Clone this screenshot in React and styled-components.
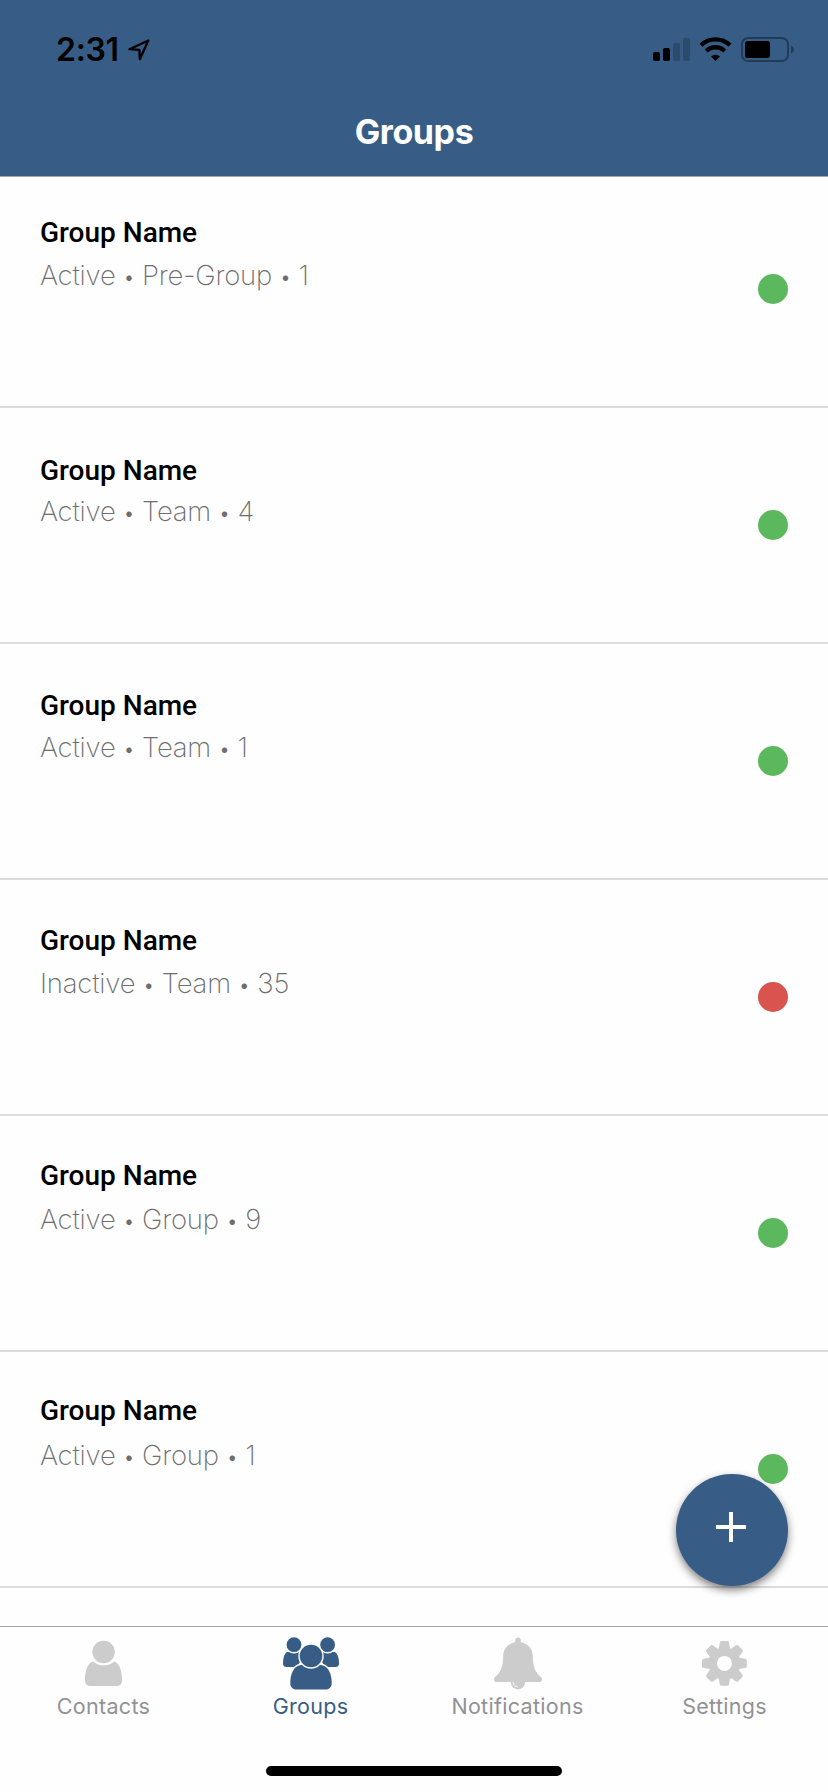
import React from "react";
import styled, { createGlobalStyle } from "styled-components";

const GlobalStyle = createGlobalStyle`
  * { box-sizing: border-box; }
  body { margin: 0; background: #fefefe; font-family: Inter, "Liberation Sans", sans-serif; }
`;

const BLUE = "#375d86";
const STATUS = { Active: "#5cb85c", Inactive: "#d9534f" };

const Screen = styled.div`
  position: relative;
  width: 828px;
  height: 1792px;
  display: flex;
  flex-direction: column;
  overflow: hidden;
  background: #fefefe;
`;

const Header = styled.header`
  flex: none;
  height: 177px;
  background: ${BLUE};
  border-bottom: 1px solid #a7a6ab;
`;

const StatusBar = styled.div`
  height: 88px;
  padding: 11px 34px 0 56px;
  display: flex;
  align-items: center;
  justify-content: space-between;
`;

const StatusGroup = styled.div`
  display: flex;
  align-items: center;
  gap: 8px;
`;

const Clock = styled.span`
  font-size: 32px;
  line-height: 40px;
  font-weight: 600;
  letter-spacing: -0.3px;
  color: #000;
`;

const Title = styled.h1`
  margin: 0;
  height: 88px;
  text-align: center;
  font-size: 34px;
  line-height: 88px;
  font-weight: 700;
  letter-spacing: -0.4px;
  color: #fff;
`;

const List = styled.main`
  flex: 1;
  min-height: 0;
  overflow: hidden;
`;

const Row = styled.section`
  height: ${(p) => p.$height}px;
  padding: 0 40px 102px;
  border-bottom: 2px solid #dcdcdd;
  display: flex;
  align-items: flex-end;
  justify-content: space-between;
`;

const RowText = styled.div`
  margin-bottom: 11px;
`;

const Name = styled.h2`
  margin: 0 0 ${(p) => p.$gap}px;
  font-family: Roboto, sans-serif;
  font-size: 28px;
  line-height: 34px;
  font-weight: 500;
  color: #000;
`;

const Detail = styled.p`
  margin: 0;
  height: 36px;
  font-size: 27.5px;
  line-height: 36px;
  font-weight: 200;
  letter-spacing: -0.2px;
  white-space: pre;
  color: #6e6e6e;
`;

const Separator = styled.span`
  font-size: 24px;
  line-height: 1;
  letter-spacing: -0.2px;
`;

const Dot = styled.span`
  width: 30px;
  height: 30px;
  border-radius: 50%;
  background: ${(p) => p.$color};
`;

const Fab = styled.button`
  position: absolute;
  right: 40px;
  bottom: 206px;
  width: 112px;
  height: 112px;
  padding: 0;
  border: 0;
  border-radius: 50%;
  background: ${BLUE};
  box-shadow: 0 4px 9px rgba(0, 0, 0, 0.5);
`;

const TabBar = styled.nav`
  flex: none;
  height: 166px;
  border-top: 1px solid #a5a5a7;
  background: #fefefe;
`;

const Tabs = styled.div`
  display: flex;
  height: 139px;
  padding-top: 8px;
`;

const Tab = styled.div`
  flex: 1;
  display: flex;
  flex-direction: column;
  align-items: center;
  color: ${(p) => (p.$active ? BLUE : "#ccc")};
`;

const TabLabel = styled.span`
  margin-top: -1px;
  font-size: 21.5px;
  line-height: 28px;
  letter-spacing: 0.3px;
  color: ${(p) => (p.$active ? BLUE : "#929296")};
`;

const HomeIndicator = styled.div`
  width: 296px;
  height: 10px;
  margin: 0 auto;
  border-radius: 5px;
  background: #000;
`;

const TabSvg = styled.svg`
  display: block;
  width: 61px;
  height: 58px;
  fill: currentColor;
`;

const LocationSvg = styled.svg`
  display: block;
  width: 24px;
  height: 24px;
`;

const PlusSvg = styled.svg`
  display: block;
  width: 112px;
  height: 112px;
`;

const LocationIcon = () => (
  <LocationSvg viewBox="0 0 24 24">
    <path d="M2.5 11.2 L21.3 2.5 L12.8 21.2 L12.4 11.8 Z" fill="none" stroke="#000" strokeWidth="2.3" strokeLinejoin="round" />
  </LocationSvg>
);

const SignalIcons = () => (
  <svg width="144" height="28" viewBox="650 36 144 28">
    <rect x="653" y="52" width="7" height="9" rx="1.7" />
    <rect x="663" y="48" width="7" height="13" rx="1.7" />
    <rect x="673" y="43" width="7" height="18" rx="1.7" fill="#2a4b6c" />
    <rect x="683" y="38" width="7" height="23" rx="1.7" fill="#2a4b6c" />
    <g fill="none" stroke="#000" strokeWidth="4.3">
      <path d="M701 45.2 A21 21 0 0 1 730 45.2" />
      <path d="M706.3 51 A13.2 13.2 0 0 1 724.7 51" />
    </g>
    <path d="M715.5 61 L711 56.4 A6.6 6.6 0 0 1 720 56.4 Z" />
    <rect x="742" y="38" width="46" height="23" rx="6.2" fill="none" stroke="#213c59" strokeWidth="2" />
    <rect x="745" y="41" width="25" height="17" rx="2.5" />
    <path d="M791 45.5 Q794 47 794 49.5 Q794 52 791 53.5 Z" fill="#213c59" />
  </svg>
);

const ContactIcon = () => (
  <TabSvg viewBox="0 0 61 58">
    <circle cx="30.6" cy="17" r="11.2" />
    <path d="M20 26.4 C14 28 12 37 12 45 C12 49 14 51 18 51 H43 C47 51 49 49 49 45 C49 37 47 28 41.3 26.4 C38 29 34.5 30.3 30.6 30.3 C26.6 30.3 23 29 20 26.4 Z" />
  </TabSvg>
);

const GroupIcon = () => (
  <TabSvg viewBox="0 0 61 58">
    <path d="M7 17 C4 19 3 24 3 28.5 C3 31 4.5 32 6.5 32 H17 L24 20 L19 17 Z" />
    <path d="M55 17 C58 19 59 24 59 28.5 C59 31 57.5 32 55.5 32 H45 L38 20 L43 17 Z" />
    <g stroke="#fefefe" strokeWidth="2.8" paintOrder="stroke">
      <circle cx="14" cy="9.7" r="7.4" />
      <circle cx="47.6" cy="9.7" r="7.4" />
      <path d="M21 30 C13 31 10.3 40 10.3 48 C10.3 52 12.5 54.6 17 54.6 H45 C49.5 54.6 51.7 52 51.7 48 C51.7 40 49 31 41 30 Z" />
      <circle cx="31" cy="21" r="11.3" />
    </g>
  </TabSvg>
);

const BellIcon = () => (
  <TabSvg viewBox="0 0 61 58">
    <circle cx="31" cy="47.2" r="7.2" />
    <path d="M28.2 7.2 V5 C28.2 1.5 33.8 1.5 33.8 5 V7.2 C41 8.5 45.8 14 45.8 21 C46 31 47.5 36.5 54.2 42.3 C56 44.2 55 47 52 47 H10 C7 47 6 44.2 7.8 42.3 C14.5 36.5 16 31 16.2 21 C16.2 14 21 8.5 28.2 7.2 Z" />
    <path d="M26.2 47.2 C26.4 49.8 28.2 51.6 30.6 51.9" fill="none" stroke="#fefefe" strokeWidth="1" />
  </TabSvg>
);

const GearIcon = () => (
  <TabSvg viewBox="0 0 61 58">
    <g transform="translate(30.4 28.4)">
      {[0, 45, 90, 135, 180, 225, 270, 315].map((a) => (
        <path key={a} transform={`rotate(${a})`} d="M-6.6 -13 Q-5 -16 -4.7 -20.5 Q-4.5 -22.4 -3 -22.4 H3 Q4.5 -22.4 4.7 -20.5 Q5 -16 6.6 -13 Z" />
      ))}
      <circle r="11.3" fill="none" stroke="currentColor" strokeWidth="7.6" />
    </g>
  </TabSvg>
);

const groups = [
  { status: "Active", type: "Pre-Group", count: 1, gap: 7, height: 231 },
  { status: "Active", type: "Team", count: 4, gap: 5, height: 236 },
  { status: "Active", type: "Team", count: 1, gap: 6, height: 236 },
  { status: "Inactive", type: "Team", count: 35, gap: 7, height: 236 },
  { status: "Active", type: "Group", count: 9, gap: 8, height: 236 },
  { status: "Active", type: "Group", count: 1, gap: 9, height: 236 },
];

const tabs = [
  { label: "Contacts", Icon: ContactIcon },
  { label: "Groups", Icon: GroupIcon, active: true },
  { label: "Notifications", Icon: BellIcon },
  { label: "Settings", Icon: GearIcon },
];

export default function App() {
  return (
    <Screen>
      <GlobalStyle />
      <Header>
        <StatusBar>
          <StatusGroup>
            <Clock>2:31</Clock>
            <LocationIcon />
          </StatusGroup>
          <SignalIcons />
        </StatusBar>
        <Title>Groups</Title>
      </Header>
      <List>
        {groups.map((g, i) => (
          <Row key={i} $height={g.height}>
            <RowText>
              <Name $gap={g.gap}>Group Name</Name>
              <Detail>
                {g.status}
                <Separator>{" • "}</Separator>
                {g.type}
                <Separator>{" • "}</Separator>
                {g.count}
              </Detail>
            </RowText>
            <Dot $color={STATUS[g.status]} />
          </Row>
        ))}
      </List>
      <TabBar>
        <Tabs>
          {tabs.map(({ label, Icon, active }) => (
            <Tab key={label} $active={active}>
              <Icon />
              <TabLabel $active={active}>{label}</TabLabel>
            </Tab>
          ))}
        </Tabs>
        <HomeIndicator />
      </TabBar>
      <Fab aria-label="Add group">
        <PlusSvg viewBox="0 0 112 112">
          <path d="M40 53H70M55 38V68" stroke="#fff" strokeWidth="4" />
        </PlusSvg>
      </Fab>
    </Screen>
  );
}
